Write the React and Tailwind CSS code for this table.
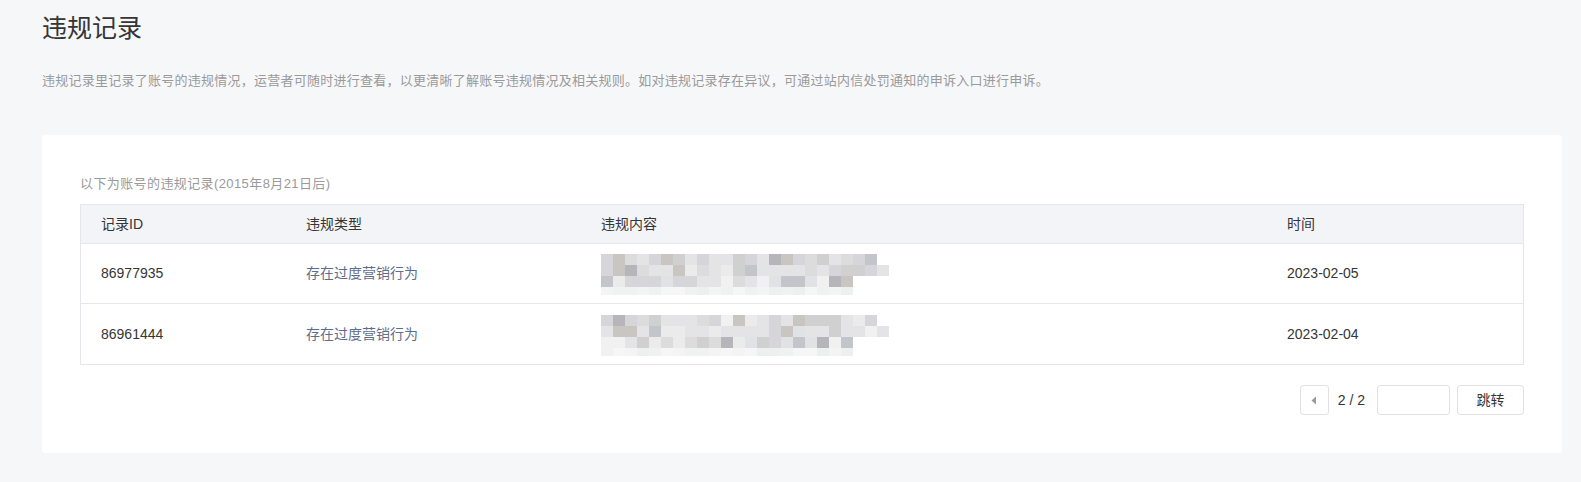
import React from "react";

const PALETTE = [
  "bg-[#d0d0d0]",
  "bg-[#dcdcdc]",
  "bg-[#e4e4e6]",
  "bg-[#ebebeb]",
  "bg-[#d6d6da]",
  "bg-[#c9c6c2]",
  "bg-[#b6b6ba]",
  "bg-[#f1f1f1]",
  "bg-[#e0e2e6]",
  "bg-[#c3c5ca]",
];
const FAINT = ["bg-[#f4f4f4]", "bg-[#f0f1f1]", "bg-[#f6f6f6]", "bg-[#eeefef]"];

function Mosaic({ seed }) {
  const rows = [
    { n: 23, faint: false },
    { n: 24, faint: false },
    { n: 21, faint: false },
    { n: 21, faint: true },
  ];
  let s = seed;
  const rnd = () => {
    s = (s * 9301 + 49297) % 233280;
    return s / 233280;
  };
  return (
    <div className="flex flex-col">
      {rows.map((r, i) => (
        <div key={i} className={i === 3 ? "flex h-[8px]" : "flex h-[11px]"}>
          {Array.from({ length: r.n }).map((_, j) => {
            const pal = r.faint ? FAINT : PALETTE;
            let idx = Math.floor(rnd() * pal.length);
            if (!r.faint && i < 2 && idx > 5 && rnd() > 0.3) idx = 2;
            return <div key={j} className={`w-[12px] h-full ${pal[idx]}`} />;
          })}
        </div>
      ))}
    </div>
  );
}

const rows = [
  { id: "86977935", type: "存在过度营销行为", date: "2023-02-05", seed: 7 },
  { id: "86961444", type: "存在过度营销行为", date: "2023-02-04", seed: 31 },
];

export default function App() {
  return (
    <div
      className="w-[1581px] h-[482px] bg-[#f6f7f9] pl-[42px] overflow-hidden"
      style={{ fontFamily: '"Liberation Sans", "Noto Sans CJK SC", sans-serif' }}
    >
      <h1 className="pt-[10px] text-[25px] leading-[36px] text-[#353535] font-normal">违规记录</h1>
      <p className="mt-[25px] text-[13px] leading-[20px] tracking-[0.25px] text-[#9a9a9a]">
        违规记录里记录了账号的违规情况，运营者可随时进行查看，以更清晰了解账号违规情况及相关规则。如对违规记录存在异议，可通过站内信处罚通知的申诉入口进行申诉。
      </p>
      <div className="mt-[44px] w-[1520px] h-[318px] bg-white rounded-[3px] pt-[39px] px-[38px]">
        <div className="text-[13px] leading-[20px] tracking-[0.4px] text-[#9a9a9a]">以下为账号的违规记录(2015年8月21日后)</div>
        <div className="mt-[10px] border border-[#e4e6eb] text-[14px]">
          <div className="flex h-[39px] items-center bg-[#f3f4f7] border-b border-[#e4e6eb] text-[#353535]">
            <div className="w-[225px] pl-[20px]">记录ID</div>
            <div className="w-[295px]">违规类型</div>
            <div className="w-[686px]">违规内容</div>
            <div>时间</div>
          </div>
          {rows.map((r, i) => (
            <div
              key={r.id}
              className={`flex h-[60px] items-center ${i === 0 ? "border-b border-[#e4e6eb]" : ""}`}
            >
              <div className="w-[225px] pl-[20px] text-[#353535]">{r.id}</div>
              <div className="w-[295px] text-[#5f6d8a]">{r.type}</div>
              <div className="w-[686px] pt-[2px]">
                <Mosaic seed={r.seed} />
              </div>
              <div className="text-[#353535]">{r.date}</div>
            </div>
          ))}
        </div>
        <div className="mt-[20px] flex justify-end items-center h-[30px] text-[14px] text-[#353535]">
          <button className="w-[29px] h-[30px] border border-[#e2e2e2] rounded-[3px] bg-white flex items-center justify-center">
            <svg width="6" height="9" viewBox="0 0 6 9">
              <path d="M5 0.5 L0.5 4.5 L5 8.5 Z" fill="#9a9a9a" />
            </svg>
          </button>
          <span className="ml-[9px] mr-[12px]">2 / 2</span>
          <input className="w-[73px] h-[30px] border border-[#e2e2e2] rounded-[3px] bg-white outline-none" />
          <button className="ml-[7px] w-[67px] h-[30px] border border-[#e2e2e2] rounded-[3px] bg-white text-[#353535]">
            跳转
          </button>
        </div>
      </div>
    </div>
  );
}
